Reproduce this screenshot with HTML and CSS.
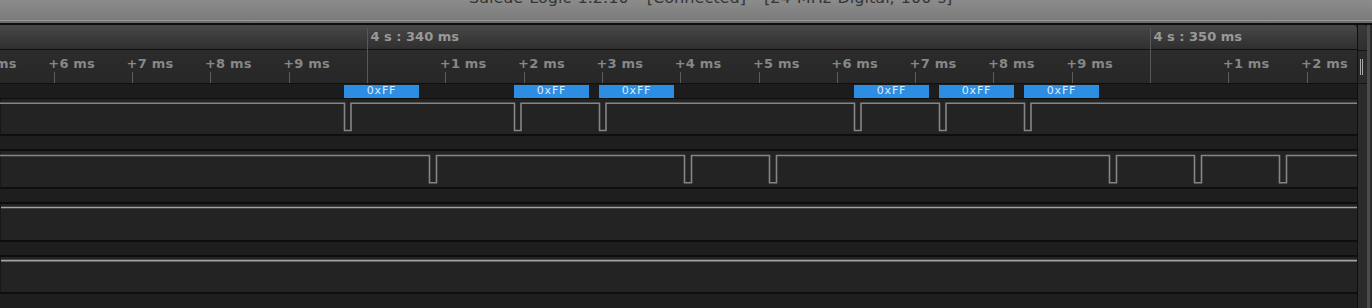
FILE: index.html
```html
<!DOCTYPE html>
<html>
<head>
<meta charset="utf-8">
<link rel="stylesheet" href="styles.css">
</head>
<body>
<div class="window">
  <div class="titlebar"><span class="title">Saleae Logic 1.2.10 - [Connected] - [24 MHz Digital, 100 s]</span></div>
  <div class="titlebar-edge"></div>
  <div class="main">
    <div class="view">
      <div class="ruler">
        <div class="hdr">
          <span class="hdr-label" style="left:370.5px">4 s : 340 ms</span>
          <span class="hdr-label" style="left:1153.5px">4 s : 350 ms</span>
        </div>
        <div class="ticks">
          <span class="tick-label" style="left:-30px">+5 ms</span>
          <span class="tick-label" style="left:48.3px">+6 ms</span>
          <span class="tick-label" style="left:126.6px">+7 ms</span>
          <span class="tick-label" style="left:204.9px">+8 ms</span>
          <span class="tick-label" style="left:283.2px">+9 ms</span>
          <span class="tick-label" style="left:439.8px">+1 ms</span>
          <span class="tick-label" style="left:518.1px">+2 ms</span>
          <span class="tick-label" style="left:596.4px">+3 ms</span>
          <span class="tick-label" style="left:674.7px">+4 ms</span>
          <span class="tick-label" style="left:753px">+5 ms</span>
          <span class="tick-label" style="left:831.3px">+6 ms</span>
          <span class="tick-label" style="left:909.6px">+7 ms</span>
          <span class="tick-label" style="left:987.9px">+8 ms</span>
          <span class="tick-label" style="left:1066.2px">+9 ms</span>
          <span class="tick-label" style="left:1222.8px">+1 ms</span>
          <span class="tick-label" style="left:1301.1px">+2 ms</span>
          <span class="tick" style="left:53.8px"></span>
          <span class="tick" style="left:132.1px"></span>
          <span class="tick" style="left:210.4px"></span>
          <span class="tick" style="left:288.7px"></span>
          <span class="tick" style="left:445.3px"></span>
          <span class="tick" style="left:523.6px"></span>
          <span class="tick" style="left:601.9px"></span>
          <span class="tick" style="left:680.2px"></span>
          <span class="tick" style="left:758.5px"></span>
          <span class="tick" style="left:836.8px"></span>
          <span class="tick" style="left:915.1px"></span>
          <span class="tick" style="left:993.4px"></span>
          <span class="tick" style="left:1071.7px"></span>
          <span class="tick" style="left:1228.3px"></span>
          <span class="tick" style="left:1306.6px"></span>
        </div>
        <span class="major-line" style="left:367px"></span>
        <span class="major-line" style="left:1150px"></span>
      </div>
      <div class="bytes">
        <span class="byte" style="left:344px">0xFF</span>
        <span class="byte" style="left:514px">0xFF</span>
        <span class="byte" style="left:599px">0xFF</span>
        <span class="byte" style="left:854px">0xFF</span>
        <span class="byte" style="left:939px">0xFF</span>
        <span class="byte" style="left:1024px">0xFF</span>
      </div>

      <div class="chan chan-a">
        <svg class="wave" width="1357" height="35" viewBox="0 0 1357 35">
          <polyline class="sig" points="0,4.3 344.5,4.3 344.5,31.5 351,31.5 351,4.3 514.5,4.3 514.5,31.5 521,31.5 521,4.3 599.5,4.3 599.5,31.5 606,31.5 606,4.3 854.5,4.3 854.5,31.5 861,31.5 861,4.3 939.5,4.3 939.5,31.5 946,31.5 946,4.3 1024.5,4.3 1024.5,31.5 1031,31.5 1031,4.3 1357,4.3"/>
        </svg>
      </div>
      <div class="band"></div>

      <div class="chan chan-b">
        <svg class="wave" width="1357" height="36" viewBox="0 0 1357 36">
          <polyline class="sig" points="0,4.5 429.5,4.5 429.5,31.7 436.5,31.7 436.5,4.5 684.5,4.5 684.5,31.7 691.5,31.7 691.5,4.5 769.5,4.5 769.5,31.7 776.5,31.7 776.5,4.5 1109.5,4.5 1109.5,31.7 1116.5,31.7 1116.5,4.5 1194.5,4.5 1194.5,31.7 1201.5,31.7 1201.5,4.5 1279.5,4.5 1279.5,31.7 1286.5,31.7 1286.5,4.5 1357,4.5"/>
        </svg>
      </div>
      <div class="band"></div>

      <div class="chan chan-b">
        <svg class="wave" width="1357" height="36" viewBox="0 0 1357 36">
          <polyline class="sig sig-flat" points="1,3.5 1357,3.5"/>
        </svg>
      </div>
      <div class="band"></div>

      <div class="chan chan-a">
        <svg class="wave" width="1357" height="35" viewBox="0 0 1357 35">
          <polyline class="sig sig-flat" points="1,3.7 1357,3.7"/>
        </svg>
      </div>
      <div class="band band-last"></div>
    </div>
    <div class="side">
      <div class="side-body">
        <div class="side-top"></div>
        <div class="grip"><span class="grip-bar"></span><span class="grip-bar"></span></div>
      </div>
      <div class="side-strip"></div>
    </div>
  </div>
</div>
</body>
</html>
```

FILE: styles.css
```css
html, body {
  margin: 0;
  padding: 0;
  background: #1e1e1e;
  overflow: hidden;
}

.window {
  width: 1372px;
  height: 308px;
  overflow: hidden;
  display: flex;
  flex-direction: column;
}

.titlebar {
  height: 20px;
  flex: none;
  background: linear-gradient(#8c8c8c, #7a7a7a);
  border-bottom: 1px solid #9a9a9a;
  padding-left: 469px;
  overflow: hidden;
  display: flex;
  align-items: flex-start;
}

.title {
  font-family: "DejaVu Sans", sans-serif;
  font-size: 16.1px;
  line-height: 18px;
  margin-top: -10.8px;
  color: #353535;
  white-space: nowrap;
  word-spacing: 1px;
}

.titlebar-edge {
  height: 2px;
  flex: none;
  background: #6b6b6b;
  border-bottom: 2px solid #0e0e0e;
}

.main {
  flex: 1;
  display: flex;
  min-height: 0;
}

.view {
  width: 1357px;
  flex: none;
  border-right: 1px solid #0f0f0f;
  display: flex;
  flex-direction: column;
  background: #1e1e1e;
}

.ruler {
  position: relative;
  flex: none;
}

.hdr {
  position: relative;
  height: 24px;
  background: linear-gradient(#484848, #2f2f2f);
  border-bottom: 1px solid #101010;
  border-top-right-radius: 4px;
}

.hdr-label {
  position: absolute;
  top: 4px;
  font-family: "DejaVu Sans", sans-serif;
  font-weight: bold;
  font-size: 13px;
  line-height: 15px;
  color: #999999;
  white-space: nowrap;
}

.ticks {
  position: relative;
  height: 33px;
  background: linear-gradient(#2c2c2c, #272727);
  border-bottom: 1px solid #101010;
  overflow: hidden;
}

.tick-label {
  position: absolute;
  top: 6px;
  font-family: "DejaVu Sans", sans-serif;
  font-weight: bold;
  font-size: 13px;
  line-height: 15px;
  letter-spacing: 0.2px;
  color: #878787;
  white-space: nowrap;
}

.tick {
  position: absolute;
  bottom: 0;
  width: 1px;
  height: 11px;
  background: #5c5c5c;
}

.major-line {
  position: absolute;
  top: 3px;
  bottom: 1px;
  width: 1px;
  background: #585858;
}

.bytes {
  position: relative;
  height: 14px;
  flex: none;
  background: #1c1c1c;
  border-bottom: 1px solid #0f0f0f;
}

.byte {
  position: absolute;
  top: 1px;
  width: 75px;
  height: 13px;
  background: #2c8de2;
  color: #dcecfb;
  font-family: "DejaVu Sans", sans-serif;
  font-size: 11px;
  line-height: 12px;
  letter-spacing: 0.8px;
  text-align: center;
}

.chan {
  flex: none;
  background: #232323;
  border-left: 1px solid #181818;
  border-bottom: 2px solid #0e0e0e;
}

.chan-a { height: 35px; }
.chan-b { height: 36px; }

.wave {
  display: block;
  margin-left: -1px;
}

.sig {
  fill: none;
  stroke: #858585;
  stroke-width: 1.6;
}

.sig-flat {
  stroke: #a2a2a2;
  stroke-width: 1.7;
}

.band {
  flex: none;
  height: 13px;
  background: #1e1e1e;
  border-bottom: 2px solid #0e0e0e;
}

.band-last {
  flex: 1;
  border-bottom: none;
}

.side {
  flex: 1;
  display: flex;
  background: #2b2b2b;
}

.side-body {
  width: 9px;
  display: flex;
  flex-direction: column;
}

.side-top {
  height: 25px;
  background: linear-gradient(#3a3a3a, #2e2e2e);
  border-bottom: 1px solid #151515;
  border-top-right-radius: 4px;
}

.grip {
  height: 33px;
  display: flex;
  gap: 1px;
  padding-top: 8px;
  padding-left: 2px;
  box-sizing: border-box;
  border-bottom: 1px solid #151515;
}

.grip-bar {
  width: 1px;
  height: 16px;
  background: #a8a8a8;
}

.side-strip {
  width: 3px;
  background: #4c4c4c;
}
```
